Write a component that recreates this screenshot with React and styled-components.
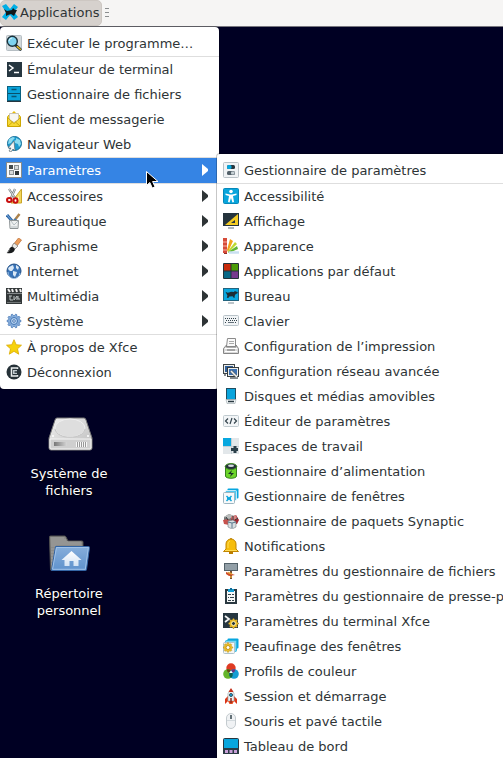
import React from "react";
import styled, { createGlobalStyle } from "styled-components";

const GlobalStyle = createGlobalStyle`
  * { box-sizing: border-box; }
  html, body { margin: 0; padding: 0; overflow: hidden; background: #000023; }
  body, button { font-family: "DejaVu Sans", sans-serif; font-size: 13px; line-height: 17px; }
`;

const Screen = styled.div`
  position: relative;
  display: flex;
  flex-direction: column;
  height: 100vh;
  overflow: hidden;
  background: #000023;
`;

const Panel = styled.header`
  display: flex;
  align-items: center;
  gap: 3px;
  height: 27px;
  background: #f6f5f4;
  border-bottom: 1px solid #77767e;
`;

const PanelButton = styled.button`
  display: flex;
  align-items: center;
  gap: 2px;
  height: 26px;
  padding: 0 2px 1px 1px;
  border: 1px solid #cdc7c2;
  border-radius: 5px;
  background: #d6d1cd;
  color: #2e3436;
`;

const Handle = styled.span`
  display: grid;
  gap: 3px;
  width: 4px;
  padding-bottom: 1px;
`;

const HandleLine = styled.i`
  height: 1px;
  background: #8b8e8f;
`;

const Desktop = styled.main`
  flex: 1;
  padding: 384px 19px 0;
`;

const DesktopIcons = styled.div`
  display: grid;
  grid-template-columns: 100px;
  grid-auto-rows: 120px;
`;

const Launcher = styled.button`
  display: flex;
  flex-direction: column;
  align-items: center;
  gap: 6px;
  padding: 0;
  border: 0;
  background: none;
  color: #fff;
  text-shadow: 1px 1px 2px #000;

  svg { width: 48px; height: 48px; }
`;

const MenuBox = styled.nav`
  position: absolute;
  padding: 4px 0;
  background: #fff;
  box-shadow: 0 0 0 1px rgba(0, 0, 0, 0.22);
`;

const MainMenu = styled(MenuBox)`
  top: 27px;
  left: 0;
  min-width: 219px;
  border-radius: 4px;
`;

const SubMenu = styled(MenuBox)`
  top: 154px;
  left: 217px;
  min-width: calc(100% - 217px);
  border-radius: 3px 0 0 0;
`;

const Item = styled.button`
  display: flex;
  align-items: center;
  gap: 5px;
  width: 100%;
  height: 25px;
  padding: 0 11px 0 6px;
  border: 0;
  text-align: left;
  white-space: nowrap;
  color: ${(p) => (p.$active ? "#fff" : "#2e3436")};
  background: ${(p) => (p.$active ? "#3584e4" : "transparent")};
`;

const ItemText = styled.span`
  flex: 1;
`;

const Separator = styled.hr`
  height: 1px;
  margin: 0;
  border: 0;
  background: #dedede;
`;

const IconSvg = styled.svg`
  flex: none;
  width: 16px;
  height: 16px;
  margin-bottom: 1px;
`;

const ArrowSvg = styled.svg`
  flex: none;
  width: 6px;
  height: 12px;
  margin-bottom: 1px;
`;

const Pointer = styled.svg`
  position: absolute;
  left: 146px;
  top: 171px;
  width: 13px;
  height: 18px;
`;

const gearPath = (cx, cy, r, n) => {
  const pts = [];
  for (let i = 0; i < n * 4; i++) {
    const a = ((i - 0.5) / (n * 4)) * Math.PI * 2;
    const d = i % 4 < 2 ? r : r * 0.78;
    pts.push(`${cx + d * Math.cos(a)},${cy + d * Math.sin(a)}`);
  }
  return `M${pts.join("L")}Z`;
};

const mousePath =
  "M2.5 5.2 4.5 6.2 6 6.1 8 5.2 11 5.5 12 4.2 12.6 5 14.8 5.6 14.3 7 12.7 7.5 11.6 9.4 11.8 11.3 10.3 11 9.6 9.8 6.3 9.9 5.4 11.4 3.8 11.2 4.4 9 3.6 7.4Z";

const icons = {
  xfce: (
    <>
      <path d="M0 2 4 0 8 5 12 0 16 3 12 8 16 13 12 16 8 11 4 16 0 13 4 8Z" fill="#00aee5" />
      <path d="M2 5 5 7 10 6 11 4 13 6 15 6 13 10 12 12 9 10 6 11 4 12 4 9Z" fill="#111719" />
    </>
  ),
  search: (
    <>
      <rect x=".5" y=".5" width="15" height="15" rx="1" fill="#d3d9dc" stroke="#b6bec3" />
      <path d="m9.5 10 4.7 4.2" stroke="#18282e" strokeWidth="2.8" strokeLinecap="round" />
      <path d="m11.3 11.6 3 2.6" stroke="#e8b91d" strokeWidth="1.5" strokeLinecap="round" />
      <circle cx="6.3" cy="6.3" r="5" fill="#7fd3ef" stroke="#1c323b" strokeWidth="1.4" />
      <path d="M3 6a3.3 3.3 0 0 1 3-3" stroke="#d9f5ff" fill="none" />
    </>
  ),
  terminal: (
    <>
      <rect x="1" y="1" width="15" height="15" fill="#263640" />
      <path d="m3 4 4 3-4 3" stroke="#fff" strokeWidth="1.5" fill="none" />
      <path d="M8 11.5h5" stroke="#fff" strokeWidth="1.5" />
    </>
  ),
  files: (
    <>
      <rect x="1.500" y=".5" width="13" height="14" fill="#0aa3da" stroke="#09607f" />
      <path d="M2 7.500h12" stroke="#09506a" />
      <path d="M5.500 3.500h5M5.500 10.500h5" stroke="#075675" strokeWidth="1.500" />
      <path d="M1 15.500h14" stroke="#263640" />
    </>
  ),
  mail: (
    <>
      <path d="m8 0 2 2H6Z" fill="#e9bd08" />
      <path d="M1.500 6 3 4h10l1.500 2v9.500h-13Z" fill="#f7d935" stroke="#cda703" />
      <path d="M3.500 2.500h9V9L8 11.500 3.500 9Z" fill="#f8f7f2" stroke="#c9c4b5" />
      <path d="m1.500 6.500 6.500 6 6.500-6M2 15l4.500-4M14 15l-4.500-4" fill="none" stroke="#cfaa09" />
    </>
  ),
  web: (
    <>
      <circle cx="8.500" cy="7.500" r="7" fill="#1c9bd0" stroke="#176e98" />
      <path d="m3 3 4-2 2 1-2 2-2 3-3 1Zm7-1 4 2 1 4-2 3-1-3-3-1-1-2 2-1Z" fill="#8cdbf0" />
      <path d="m8 5-6 7 3 0-2 3 2 1 2-3 2 2Z" fill="#f5f5f5" stroke="#5c6b70" strokeWidth=".7" />
    </>
  ),
  settings: (
    <>
      <rect x=".5" y=".5" width="15" height="15" fill="#fafafa" stroke="#878b8b" />
      <rect x="3" y="3" width="4" height="4" fill="#454b4d" />
      <rect x="8.500" y="3.500" width="4" height="4" fill="#d7d9da" stroke="#8b9092" />
      <rect x="3.500" y="8.500" width="4" height="4" fill="#d7d9da" stroke="#8b9092" />
      <rect x="9" y="9" width="4" height="4" fill="#303638" />
    </>
  ),
  accessories: (
    <>
      <path d="M15.500 1v14H5Z" fill="#f3d65b" stroke="#c9a52a" />
      <path d="M13 8v4h-3Z" fill="#fff2b5" />
      <path d="m3 1 6 9M9 1 5 10" stroke="#747b7c" strokeWidth="2.200" />
      <path d="m3 1 6 9M9 1 5 10" stroke="#dde0e0" />
      <ellipse cx="3.300" cy="12" rx="2.300" ry="2" fill="#fff" stroke="#c80d0d" strokeWidth="2" />
      <ellipse cx="9.500" cy="12.500" rx="2" ry="2.200" fill="#fff" stroke="#c80d0d" strokeWidth="2" />
    </>
  ),
  office: (
    <>
      <path d="m1 2 6 7" stroke="#2d66a6" strokeWidth="3" />
      <path d="m1 2 6 7" stroke="#79a9dd" />
      <path d="M13.500 1 8 8" stroke="#ad824b" strokeWidth="2.500" />
      <path d="M10 6 7 9" stroke="#3b7abc" strokeWidth="2" />
      <path d="M3.500 7.500h9l-.5 8H4Z" fill="#eef0f0" stroke="#8e9496" />
      <path d="m5 8 3 4 4-4M5 14h6" fill="none" stroke="#b7bfc3" />
    </>
  ),
  graphics: (
    <>
      <path d="m12.500 0 3 2-6 8-3-2.500Z" fill="#ed9e5c" stroke="#b96c32" strokeWidth=".7" />
      <path d="m8 5 4 3-3 3-3-3Z" fill="#e9e9e6" stroke="#777" strokeWidth=".7" />
      <path d="M6 8.500 9 11c-1 4-4 5-8.500 4 2-.5 2-5 5.500-6.500Z" fill="#181b1c" />
      <path d="M4 11c-1 1-1 2-2 3" stroke="#777" />
    </>
  ),
  internet: (
    <>
      <circle cx="8" cy="8" r="7" fill="#3974b8" stroke="#214f86" />
      <path d="m3 4 4-2 1 3-2 3H4L2 6Zm7-2 3 2-1 3-2-2ZM7 8l4 1-2 5-2-2Z" fill="#dbe9f6" />
      <path d="M2 9a6 6 0 0 0 12 1" stroke="#a0c5ea" fill="none" />
    </>
  ),
  multimedia: (
    <>
      <rect x="0" y="0" width="16" height="16" fill="#333839" />
      <path d="m2 1 2 3M6 1l1 3M10 1l1 3M14 1l1 3" stroke="#f1f1f1" strokeWidth="2" />
      <path d="M1 5.500h15" stroke="#84898b" />
      <path d="M3 8h3M4 8v4h3M8 8v4l3-4v4M12 8v3h2" stroke="#bcc2c3" fill="none" />
      <path d="M1 14.500h14" stroke="#727778" />
    </>
  ),
  system: (
    <>
      <path d={gearPath(8, 8, 7, 10)} fill="#86aedd" stroke="#4576b4" strokeWidth=".8" />
      <circle cx="8" cy="8" r="3.500" fill="#b5d1ef" stroke="#4576b4" />
      <circle cx="8" cy="8" r="1.300" fill="#fff" stroke="#4576b4" />
    </>
  ),
  star: (
    <path d="m8 .7 2.200 5 5.300.5-4 3.600 1.200 5.400L8 12.300l-4.700 2.900 1.200-5.400-4-3.600 5.300-.5Z" fill="#f6d20b" stroke="#dba900" strokeWidth=".8" />
  ),
  logout: (
    <>
      <circle cx="8" cy="8" r="7.500" fill="#263238" />
      <path d="M11.500 5V4h-6v8h6v-1" fill="none" stroke="#e9eded" strokeWidth="1.500" />
      <path d="M7 6h4v4H7Z" fill="#bfc9cd" />
      <path d="M8.500 8H12" stroke="#263238" strokeWidth="1.500" />
    </>
  ),
  manager: (
    <>
      <rect x=".5" y=".5" width="15" height="15" rx="1" fill="#f0f3f5" stroke="#b9c1c6" />
      <rect x="4" y="3" width="8" height="4" rx="1.500" fill="#26363e" />
      <rect x="4" y="3" width="4.500" height="4" rx="1.500" fill="#08a7dd" />
      <rect x="4" y="9" width="8" height="4" rx="1.500" fill="#526069" />
      <rect x="8" y="9.500" width="3.500" height="3" rx="1" fill="#c6d0d5" />
    </>
  ),
  access: (
    <>
      <rect x=".5" y=".5" width="15" height="15" rx="1" fill="#08a5dc" stroke="#0688b9" />
      <circle cx="8" cy="3.500" r="1.800" fill="#fff" />
      <path d="M2.500 5.500 7 6.500h2l4.500-1v1.500L10 8l1 6-1.500.5L8 10l-1.500 4.500L5 14l1-6-3.500-1Z" fill="#fff" />
    </>
  ),
  display: (
    <>
      <rect x="0" y="0" width="16" height="13" fill="#25343d" />
      <path d="M15 1v11H2Z" fill="#f4cc24" />
      <path d="M12 7v3H8Z" fill="#25343d" />
      <path d="M5 15h6" stroke="#adb6bb" strokeWidth="2" />
    </>
  ),
  appearance: (
    <>
      <path d="M0 0h4v15H0Z" fill="#d64b39" />
      <path d="M0 4h4M0 8h4M0 12h4" stroke="#f6b1a3" />
      <path d="m7 1 3 2-5 11-1-2Z" fill="#f3a21b" />
      <path d="m12 4 2 2-8 8-1-1Z" fill="#bdda31" />
      <path d="m14 8 1 3-9 4-1-1Z" fill="#61b734" />
      <path d="M6 14.500h10" stroke="#c9dff0" strokeWidth="2.500" />
      <path d="M1 15.500h3" stroke="#912d26" />
    </>
  ),
  defaults: (
    <>
      <rect width="16" height="16" rx="1" fill="#253239" />
      <path d="M1 1h6.500v6.500H1Z" fill="#c82b0b" />
      <path d="M8.500 1H15v6.500H8.500Z" fill="#4b9c08" />
      <path d="M1 8.500h6.500V15H1Z" fill="#086887" />
      <path d="M8.500 8.500H15V15H8.500Z" fill="#76398e" />
    </>
  ),
  desktop: (
    <>
      <rect x=".5" y=".5" width="15" height="12" fill="#09a7df" stroke="#23647f" />
      <path d={mousePath} fill="#1c2d35" transform="translate(0 -1.500)" />
      <path d="M5 15h6" stroke="#bbc4c9" strokeWidth="2" />
    </>
  ),
  keyboard: (
    <>
      <rect x=".5" y="2.500" width="15" height="10" rx="1" fill="#f1f4f6" stroke="#b9c3c9" />
      <path d="M2 5.500h12M3 7.500h11M2 9.500h2M12 9.500h2" stroke="#33424a" strokeDasharray="1 1" />
      <path d="M5 9.500h6" stroke="#647079" />
    </>
  ),
  printer: (
    <>
      <path d="M4.500.5h8v8h-9Z" fill="#fafafa" stroke="#8b8b8b" />
      <path d="M6 3.500h5M6 5.500h5" stroke="#aaa" />
      <path d="m3.500 7-3 3.500v5h15v-5L13 7v2H3.500Z" fill="#d9d9d9" stroke="#858585" />
      <path d="M2 10.500h12M2 13.500h12" stroke="#fff" />
      <path d="M4 12h8" stroke="#6e6e6e" />
    </>
  ),
  network: (
    <>
      <rect x=".5" y="1.500" width="11" height="9" fill="#edede9" stroke="#3f4548" />
      <rect x="2" y="3" width="8" height="6" fill="#315f99" />
      <rect x="4.500" y="4.500" width="11" height="9" fill="#edede9" stroke="#333a3d" />
      <rect x="6" y="6" width="8" height="6" fill="#3b70b1" />
      <path d="M7 15h8M1 12h2" stroke="#858b8e" strokeWidth="2" />
      <path d="m8 8 5 5" stroke="#5a6266" strokeWidth="2.800" />
      <path d="m8 8 6 6" stroke="#eff1f1" strokeWidth="1.500" />
    </>
  ),
  drive: (
    <>
      <rect x="3.500" y=".5" width="9" height="11" fill="#09a4dc" stroke="#1f4d61" />
      <path d="M3 11.500h10l-1 4H4Z" fill="#edf1f3" stroke="#a8b1b6" strokeWidth=".7" />
      <path d="M5 13.500h6" stroke="#283941" strokeWidth="1.500" />
    </>
  ),
  editor: (
    <>
      <rect x=".5" y="2.500" width="15" height="11" rx="1" fill="#f2f5f7" stroke="#c1cbd0" />
      <path d="M5 5.500 2.500 8 5 10.500M11 5.500 13.500 8 11 10.500M9 5l-2 6" fill="none" stroke="#33434c" strokeWidth="1.200" />
    </>
  ),
  workspace: (
    <>
      <rect width="16" height="16" fill="#e2e7ea" />
      <path d="M0 0h8v8H0Z" fill="#08a7df" />
      <path d="M8.500 0v16M0 8.500h16" stroke="#c3ced4" />
      <path d="M12 8v7M8 11.500h7" stroke="#2b3f4a" strokeWidth="3" />
    </>
  ),
  battery: (
    <>
      <path d="M2.500 3v10c0 3 11 3 11 0V3" fill="#6cd52a" stroke="#36821d" />
      <ellipse cx="8" cy="3.500" rx="5.800" ry="3" fill="#25313a" stroke="#438f28" />
      <ellipse cx="8" cy="2.700" rx="3" ry="1.300" fill="#d4dcdf" />
      <path d="m9 7-4 4h3l-1 3 4-4H8Z" fill="#1b3428" />
    </>
  ),
  windows: (
    <>
      <rect x="4.500" y=".5" width="11" height="10" rx="1" fill="#07a6df" />
      <rect x="2.500" y="2.500" width="11" height="10" rx="1" fill="#51c8ef" stroke="#fff" strokeWidth=".7" />
      <rect x=".5" y="4.500" width="11" height="11" rx="1" fill="#f7f9fa" stroke="#9cb5c1" />
      <path d="m3.500 8 5 5M8.500 8l-5 5" stroke="#10a6db" strokeWidth="1.500" />
      <path d="M4 10.500h4" stroke="#08a7df" strokeWidth="2" />
    </>
  ),
  synaptic: (
    <>
      <path d="m1 4 5-3 5 2-1 5-6 2-3-2Z" fill="#747878" />
      <path d="m1 4 5 2 5-3-5-2Z" fill="#b9bcbb" />
      <path d="m8 4 5-2 3 5-2 4-6-1Z" fill="#a62932" />
      <path d="m8 4 5-2 1 4-5 1Z" fill="#d78380" />
      <path d="m0 7 5-1 3 3-2 3-5-1Z" fill="#c6514d" />
      <path d="m5 8 5-1 3 2v5l-4 2-4-2Z" fill="#d8dfe2" stroke="#737c82" strokeWidth=".6" />
      <path d="m5 9 4 1 4-1M9 10v5" stroke="#5a798d" fill="none" />
      <path d="M3 4 5 7M10 3v4M12 7l3-2" stroke="#353a3c" />
    </>
  ),
  bell: (
    <>
      <path d="M8 1v3" stroke="#b77c00" strokeWidth="2" strokeLinecap="round" />
      <path d="M3 11V6a5 5 0 0 1 10 0v5l2.500 2.500H.5Z" fill="#f6bd0b" stroke="#c18500" />
      <path d="M6 15h4" stroke="#bb7d00" strokeWidth="2" />
      <path d="M5 10V6a3 3 0 0 1 2-3M2 12.500h12" fill="none" stroke="#ffdc57" />
    </>
  ),
  fileSettings: (
    <>
      <rect x="1.500" y=".5" width="13" height="7" fill="#929fa7" stroke="#526169" />
      <path d="M7 8h2v8H7Z" fill="#795133" />
      <path d="m3 9 9 3-6 1-3-2Z" fill="#cf4a24" />
      <path d="M5 9.500 9 11M8 13v2" stroke="#e0a036" strokeWidth="1.500" />
    </>
  ),
  clipboard: (
    <>
      <path d="M3 2h10v13H3Z" fill="#f6f7f7" stroke="#2b3941" strokeWidth="2" />
      <path d="M5 1h6v3H5Z" fill="#139ed5" />
      <path d="M8 0v2" stroke="#126e9b" strokeWidth="2" />
      <path d="M5 6.500h3M9 6.500h2M5 9.500h1M7 9.500h4M5 12.500h3M9 12.500h2" stroke="#34444c" />
    </>
  ),
  termSettings: (
    <>
      <rect width="15" height="15" fill="#263640" />
      <path d="m2 3 4 3-4 3" fill="none" stroke="#f4f6f7" strokeWidth="1.700" />
      <path d={gearPath(10.5, 10.5, 5, 8)} fill="#edbd29" stroke="#8d7229" strokeWidth=".5" />
      <circle cx="10.500" cy="10.500" r="2" fill="#263640" stroke="#fff1a6" />
    </>
  ),
  tweaks: (
    <>
      <rect x="4.500" y=".5" width="11" height="10" rx="1" fill="#07a6df" />
      <rect x="2.500" y="2.500" width="11" height="11" rx="1" fill="#76d7f3" stroke="#2bb5de" />
      <rect x=".5" y="4.500" width="11" height="11" rx="1" fill="#f4f6f7" stroke="#afc3cb" />
      <path d={gearPath(5, 9.5, 4.8, 8)} fill="#edbd29" stroke="#b68e17" strokeWidth=".5" />
      <circle cx="5" cy="9.500" r="2" fill="#fff" stroke="#c89b16" />
    </>
  ),
  color: (
    <>
      <circle cx="8" cy="5" r="4.700" fill="#df3b23" />
      <circle cx="5" cy="11" r="4.800" fill="#65b52a" />
      <circle cx="11" cy="11" r="4.800" fill="#149dd4" />
      <path d="M3.500 6.500A5 5 0 0 1 8 7.500 5 5 0 0 0 6.300 10 5 5 0 0 1 3.500 6.500Z" fill="#634b16" />
      <path d="M12.500 6.500A5 5 0 0 0 8 7.500 5 5 0 0 1 9.700 10a5 5 0 0 0 2.800-3.500Z" fill="#683281" />
      <path d="M6.300 10A5 5 0 0 0 8 15a5 5 0 0 0 1.700-5Z" fill="#0d604f" />
      <path d="M8 7.500 6.200 10h3.600Z" fill="#fff" />
    </>
  ),
  rocket: (
    <>
      <path d="M5 8 2 11v5l3.500-3.500ZM11 8l3 3v5l-3.500-3.500Z" fill="#dc3618" />
      <path d="M5 13V5.500L8 1l3 4.500V13Z" fill="#eef1f2" stroke="#9fa9ad" strokeWidth=".7" />
      <path d="m8 0 2.500 4h-5Z" fill="#c8321b" />
      <circle cx="8" cy="7" r="1.500" fill="#15a4da" stroke="#38505d" />
      <path d="M5 13h6l-1.500 3h-3Z" fill="#e24b21" />
      <path d="M8 10v5" stroke="#8b2b21" strokeWidth="1.500" />
    </>
  ),
  mouse: (
    <>
      <rect x="3.500" y=".5" width="9" height="15" rx="4.500" fill="#f0f2f4" stroke="#c4cbcf" />
      <path d="M4 7.500h8" stroke="#d3dade" />
      <path d="M8 2v4" stroke="#34444d" strokeWidth="1.500" />
    </>
  ),
  dashboard: (
    <>
      <rect x=".5" y=".5" width="15" height="15" rx="1" fill="#08a6dd" stroke="#263640" />
      <path d="M0 10h16v6H0Z" fill="#2b3b44" />
      <path d="M2 12h3v3H2ZM6.500 12h3v3h-3ZM11 12h3v3h-3Z" fill="#c89fd8" />
    </>
  ),
};

const Icon = ({ name }) => (
  <IconSvg viewBox="0 0 16 16" fill="none" aria-hidden="true">{icons[name]}</IconSvg>
);

const mainItems = [
  ["search", "Exécuter le programme…"],
  null,
  ["terminal", "Émulateur de terminal"],
  ["files", "Gestionnaire de fichiers"],
  ["mail", "Client de messagerie"],
  ["web", "Navigateur Web"],
  null,
  ["settings", "Paramètres", true, true],
  null,
  ["accessories", "Accessoires", true],
  ["office", "Bureautique", true],
  ["graphics", "Graphisme", true],
  ["internet", "Internet", true],
  ["multimedia", "Multimédia", true],
  ["system", "Système", true],
  null,
  ["star", "À propos de Xfce"],
  ["logout", "Déconnexion"],
];

const settingsItems = [
  ["manager", "Gestionnaire de paramètres"],
  null,
  ["access", "Accessibilité"],
  ["display", "Affichage"],
  ["appearance", "Apparence"],
  ["defaults", "Applications par défaut"],
  ["desktop", "Bureau"],
  ["keyboard", "Clavier"],
  ["printer", "Configuration de l’impression"],
  ["network", "Configuration réseau avancée"],
  ["drive", "Disques et médias amovibles"],
  ["editor", "Éditeur de paramètres"],
  ["workspace", "Espaces de travail"],
  ["battery", "Gestionnaire d’alimentation"],
  ["windows", "Gestionnaire de fenêtres"],
  ["synaptic", "Gestionnaire de paquets Synaptic"],
  ["bell", "Notifications"],
  ["fileSettings", "Paramètres du gestionnaire de fichiers"],
  ["clipboard", "Paramètres du gestionnaire de presse-papiers"],
  ["termSettings", "Paramètres du terminal Xfce"],
  ["tweaks", "Peaufinage des fenêtres"],
  ["color", "Profils de couleur"],
  ["rocket", "Session et démarrage"],
  ["mouse", "Souris et pavé tactile"],
  ["dashboard", "Tableau de bord"],
];

const MenuEntries = ({ items }) =>
  items.map((item, i) => {
    if (!item) return <Separator key={i} />;
    const [icon, label, nested, active] = item;
    return (
      <Item key={i} type="button" $active={active} aria-haspopup={nested ? "menu" : undefined} aria-expanded={nested ? Boolean(active) : undefined}>
        <Icon name={icon} />
        <ItemText>{label}</ItemText>
        {nested && (
          <ArrowSvg viewBox="0 0 6 12" aria-hidden="true">
            <path d="M0 0 6 5v2L0 12Z" fill="currentColor" />
          </ArrowSvg>
        )}
      </Item>
    );
  });

const DriveImage = () => (
  <svg viewBox="0 0 48 48" aria-hidden="true">
    <defs>
      <linearGradient id="driveTop" x1="0" y1="0" x2="1" y2="1">
        <stop stopColor="#f0f0f0" /><stop offset="1" stopColor="#bcbcbc" />
      </linearGradient>
      <linearGradient id="driveSlot">
        <stop stopColor="#777" /><stop offset="1" stopColor="#d6d6d6" />
      </linearGradient>
    </defs>
    <g transform="translate(1 0)">
      <path d="M11 7h27q1.500 0 2 2l6 18v10q0 2-2 2H5q-2 0-2-2V27L9 9q.5-2 2-2Z" fill="url(#driveTop)" stroke="#777" />
      <path d="M4 28h41v9q0 1-1 1H5q-1 0-1-1Z" fill="#cfcfcf" stroke="#f5f5f5" />
      <ellipse cx="24" cy="17" rx="15" ry="9" fill="#dedede" stroke="#efefef" />
      <path d="M9 18c2 11 28 11 30 0" fill="none" stroke="#c4c4c4" />
      <circle cx="7" cy="25" r="1" fill="#fff" /><circle cx="42" cy="25" r="1" fill="#fff" />
      <path d="M8 31h13v4H8Z" fill="url(#driveSlot)" />
      <path d="M30.500 31v5M32.500 31v5M34.500 31v5M36.500 31v5M38.500 31v5M40.500 31v5" stroke="#f8f8f8" />
      <path d="M31.500 31v5M33.500 31v5M35.500 31v5M37.500 31v5M39.500 31v5" stroke="#999" />
    </g>
  </svg>
);

const HomeImage = () => (
  <svg viewBox="0 0 48 48" aria-hidden="true">
    <defs>
      <linearGradient id="folderFront" x1="0" y1="0" x2="0" y2="1">
        <stop stopColor="#86aedb" /><stop offset="1" stopColor="#5f92cc" />
      </linearGradient>
      <linearGradient id="house" x1="0" y1="0" x2="0" y2="1">
        <stop stopColor="#fff" /><stop offset="1" stopColor="#d3e3f4" />
      </linearGradient>
    </defs>
    <g transform="translate(0 1)">
      <path d="M4.500 5q0-1 1-1h14q1 0 1.500 1l2 4h14q1 0 1 1v28H5.500Z" fill="#8b8b88" stroke="#51514f" />
      <path d="M6 6h13M6 8h15M6 10h30M6 12h30M6 14h5M6 17h4M6 20h4M6 23h4M6 26h3M6 29h3M6 32h2" stroke="#aaa" strokeWidth=".7" />
      <path d="M10.500 14.500h33q1 0 1 1l-3 22q0 1-1 1h-34Z" fill="url(#folderFront)" stroke="#3465a4" />
      <path d="M11.500 15.500h31.800l-3 21.800H7.500Z" fill="none" stroke="#a0c2e8" />
      <path d="M26.500 19 16.500 28h3v6h5v-5h4v5h5v-6h3Z" fill="url(#house)" />
    </g>
  </svg>
);

export default function App() {
  return (
    <>
      <GlobalStyle />
      <Screen>
        <Panel>
          <PanelButton type="button" aria-haspopup="menu" aria-expanded="true">
            <Icon name="xfce" />
            Applications
          </PanelButton>
          <Handle><HandleLine /><HandleLine /><HandleLine /></Handle>
        </Panel>
        <Desktop>
          <DesktopIcons>
            <Launcher type="button"><DriveImage />Système de fichiers</Launcher>
            <Launcher type="button"><HomeImage />Répertoire personnel</Launcher>
          </DesktopIcons>
        </Desktop>
        <MainMenu aria-label="Applications"><MenuEntries items={mainItems} /></MainMenu>
        <SubMenu aria-label="Paramètres"><MenuEntries items={settingsItems} /></SubMenu>
        <Pointer viewBox="0 0 13 18" aria-hidden="true">
          <path d="M.5.5v14l3.300-3 2.500 5.500 2.700-1.200-2.400-5.300H12Z" fill="#000" stroke="#fff" />
        </Pointer>
      </Screen>
    </>
  );
}
